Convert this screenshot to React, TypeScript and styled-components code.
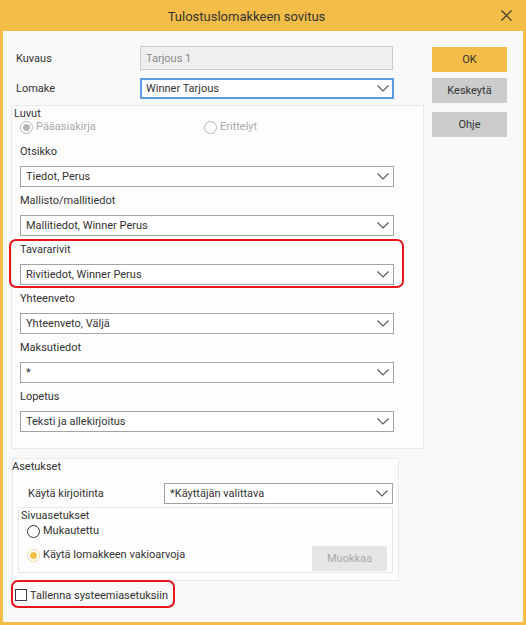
import styled, { createGlobalStyle } from "styled-components"

const GlobalStyle = createGlobalStyle`
    html, body { margin:0; padding:0; background:#ffffff; }
    body { font-family: Roboto, "Liberation Sans", Arial, sans-serif; font-size:11px; color:#333; }
    * { box-sizing:border-box; }
`

const YELLOW = "#f4bd48"

const Chevron = () => (
    <svg width="12" height="7" viewBox="0 0 12 7">
        <polyline points="0.5,0.5 6,6 11.5,0.5" fill="none" stroke="#5a5a5a" strokeWidth="1.2" />
    </svg>
)

interface DropdownProps { value:string; focused?:boolean; width?:number }

const Dropdown = (props:DropdownProps) => (
    <SelectBox $focused={props.focused} $width={props.width}>
        <span>{props.value}</span>
        <Chevron />
    </SelectBox>
)

interface RadioProps { label:string; checked?:boolean; disabled?:boolean; accent?:boolean }

const Radio = (props:RadioProps) => (
    <RadioItem $disabled={props.disabled}>
        <RadioCircle $disabled={props.disabled} $accent={props.accent}>
            {props.checked && <RadioDot $disabled={props.disabled} $accent={props.accent} />}
        </RadioCircle>
        {props.label}
    </RadioItem>
)

const groups = [
    { label:"Otsikko", value:"Tiedot, Perus" },
    { label:"Mallisto/mallitiedot", value:"Mallitiedot, Winner Perus" },
    { label:"Tavararivit", value:"Rivitiedot, Winner Perus", marked:true },
    { label:"Yhteenveto", value:"Yhteenveto, Väljä" },
    { label:"Maksutiedot", value:"*" },
    { label:"Lopetus", value:"Teksti ja allekirjoitus" },
]

export default function App() {
    return (
        <>
        <GlobalStyle />
        <Window>
            <TitleBar>
                <Title>Tulostuslomakkeen sovitus</Title>
                <CloseButton>
                    <svg width="11" height="11" viewBox="0 0 11 11">
                        <path d="M0.5 0.5 L10.5 10.5 M10.5 0.5 L0.5 10.5" stroke="#333" strokeWidth="1.1" />
                    </svg>
                </CloseButton>
            </TitleBar>
            <Body>
                <MainColumn>
                    <FieldRow $height={24}>
                        <RowLabel>Kuvaus</RowLabel>
                        <ReadOnlyInput>Tarjous 1</ReadOnlyInput>
                    </FieldRow>
                    <FieldRow $height={21} $top={8}>
                        <RowLabel>Lomake</RowLabel>
                        <Dropdown value="Winner Tarjous" focused width={254} />
                    </FieldRow>

                    <LuvutPanel>
                        <Legend>Luvut</Legend>
                        <RadioRow>
                            <RadioSlot><Radio label="Pääasiakirja" checked disabled /></RadioSlot>
                            <Radio label="Erittelyt" disabled />
                        </RadioRow>
                        <GroupList>
                            {groups.map(g => {
                                const group = (
                                    <Group key={g.label}>
                                        <GroupLabel>{g.label}</GroupLabel>
                                        <Dropdown value={g.value} />
                                    </Group>
                                )
                                return g.marked ? <Highlight key={g.label}>{group}</Highlight> : group
                            })}
                        </GroupList>
                    </LuvutPanel>

                    <SettingsPanel>
                        <Legend>Asetukset</Legend>
                        <PrinterRow>
                            <PrinterLabel>Käytä kirjoitinta</PrinterLabel>
                            <Dropdown value="*Käyttäjän valittava" width={229} />
                        </PrinterRow>
                        <PageBox>
                            <PageLabel>Sivuasetukset</PageLabel>
                            <PageRadio>
                                <Radio label="Mukautettu" />
                            </PageRadio>
                            <PageRow>
                                <PageRadio $top={2}>
                                    <Radio label="Käytä lomakkeen vakioarvoja" checked accent />
                                </PageRadio>
                                <DisabledButton>Muokkaa</DisabledButton>
                            </PageRow>
                        </PageBox>
                    </SettingsPanel>

                    <CheckHighlight>
                        <CheckBox />
                        Tallenna systeemiasetuksiin
                    </CheckHighlight>
                </MainColumn>

                <ButtonColumn>
                    <ActionButton $primary>OK</ActionButton>
                    <ActionButton>Keskeytä</ActionButton>
                    <ActionButton $top={3}>Ohje</ActionButton>
                </ButtonColumn>
            </Body>
        </Window>
        </>
    )
}

const Window = styled.div`
    width:526px;
    height:625px;
    display:flex;
    flex-direction:column;
    background:${YELLOW};
    padding:0 3px 3px 3px;
`

const TitleBar = styled.div`
    height:31px;
    display:flex;
    align-items:center;
    flex-shrink:0;
`

const Title = styled.div`
    flex:1;
    text-align:center;
    font-size:13px;
    color:#333;
    padding-top:1px;
`

const CloseButton = styled.div`
    width:32px;
    height:31px;
    margin-right:1px;
    display:flex;
    align-items:center;
    justify-content:center;
`

const Body = styled.div`
    flex:1;
    background:#f9f9f9;
    display:flex;
    gap:8px;
    padding:15px 16px 0 8px;
`

const MainColumn = styled.div`
    width:413px;
    display:flex;
    flex-direction:column;
`

const FieldRow = styled.div<{ $height:number; $top?:number }>`
    display:flex;
    align-items:center;
    height:${p => p.$height}px;
    margin-top:${p => p.$top ?? 0}px;
    padding-left:5px;
`

const RowLabel = styled.div`
    width:124px;
`

const ReadOnlyInput = styled.div`
    width:253px;
    height:24px;
    background:#efefef;
    border:1px solid #cccccc;
    color:#8a8a8a;
    display:flex;
    align-items:center;
    padding-left:5px;
`

const SelectBox = styled.div<{ $focused?:boolean; $width?:number }>`
    width:${p => p.$width ? `${p.$width}px` : "100%"};
    height:21px;
    background:#ffffff;
    border:${p => p.$focused ? "2px solid #5b9be1" : "1px solid #a3a3a3"};
    display:flex;
    align-items:center;
    justify-content:space-between;
    padding:0 ${p => p.$focused ? 3 : 4}px 0 ${p => p.$focused ? 4 : 5}px;
    color:#333;
    white-space:nowrap;
`

const Panel = styled.div`
    background:#fdfdfd;
    border:1px solid #e9e9e9;
    display:flex;
    flex-direction:column;
`

const LuvutPanel = styled(Panel)`
    margin-top:6px;
    padding:1px 29px 16px 8px;
`

const Legend = styled.div`
    line-height:14px;
    margin-left:-6px;
`

const RadioRow = styled.div`
    display:flex;
    margin-top:-1px;
    height:14px;
`

const RadioSlot = styled.div`
    width:184px;
`

const RadioItem = styled.div<{ $disabled?:boolean }>`
    display:flex;
    align-items:center;
    gap:3px;
    line-height:14px;
    color:${p => p.$disabled ? "#aaaaaa" : "#333"};
    white-space:nowrap;
`

const RadioCircle = styled.span<{ $disabled?:boolean; $accent?:boolean }>`
    width:13px;
    height:13px;
    border-radius:50%;
    border:1px solid ${p => p.$disabled ? "#b8b8b8" : p.$accent ? "#efd59c" : "#333"};
    background:#ffffff;
    display:flex;
    align-items:center;
    justify-content:center;
    flex-shrink:0;
`

const RadioDot = styled.span<{ $disabled?:boolean; $accent?:boolean }>`
    width:7px;
    height:7px;
    border-radius:50%;
    background:${p => p.$disabled ? "#b5b5b5" : p.$accent ? YELLOW : "#333"};
`

const GroupList = styled.div`
    display:flex;
    flex-direction:column;
    gap:6px;
    margin-top:10px;
`

const Group = styled.div`
    display:flex;
    flex-direction:column;
    gap:6px;
`

const GroupLabel = styled.div`
    line-height:16px;
`

const Highlight = styled.div`
    margin:-3px -10px -3px -11px;
    padding:1px 8px 1px 9px;
    border:2px solid #e8141b;
    border-radius:7px;
`

const SettingsPanel = styled(Panel)`
    width:387px;
    margin:9px 0 0 1px;
    padding:1px 5px 7px 5px;
`

const PrinterRow = styled.div`
    display:flex;
    align-items:center;
    justify-content:space-between;
    margin-top:9px;
    padding-left:10px;
`

const PrinterLabel = styled.div``

const PageBox = styled.div`
    margin-top:3px;
    border:1px solid #e9e9e9;
    padding:1px 5px 1px 2px;
    display:flex;
    flex-direction:column;
`

const PageLabel = styled.div`
    line-height:14px;
`

const PageRadio = styled.div<{ $top?:number }>`
    margin:${p => p.$top ?? 1}px 0 0 6px;
`

const PageRow = styled.div`
    display:flex;
    justify-content:space-between;
    align-items:flex-start;
    margin-top:8px;
`

const DisabledButton = styled.div`
    width:75px;
    height:25px;
    background:#e6e6e6;
    color:#a9a9a9;
    display:flex;
    align-items:center;
    justify-content:center;
`

const CheckHighlight = styled.div`
    align-self:flex-start;
    display:flex;
    align-items:center;
    gap:3px;
    margin-top:-1px;
    height:28px;
    padding:2px 5px 0 2px;
    border:2px solid #e8141b;
    border-radius:7px;
    white-space:nowrap;
`

const CheckBox = styled.span`
    width:12px;
    height:12px;
    border:1px solid #3d3a4f;
    background:#ffffff;
`

const ButtonColumn = styled.div`
    width:75px;
    display:flex;
    flex-direction:column;
    gap:6px;
    padding-top:1px;
`

const ActionButton = styled.div<{ $primary?:boolean; $top?:number }>`
    height:25px;
    margin-top:${p => p.$top ?? 0}px;
    background:${p => p.$primary ? YELLOW : "#cccccc"};
    color:#333;
    display:flex;
    align-items:center;
    justify-content:center;
`
